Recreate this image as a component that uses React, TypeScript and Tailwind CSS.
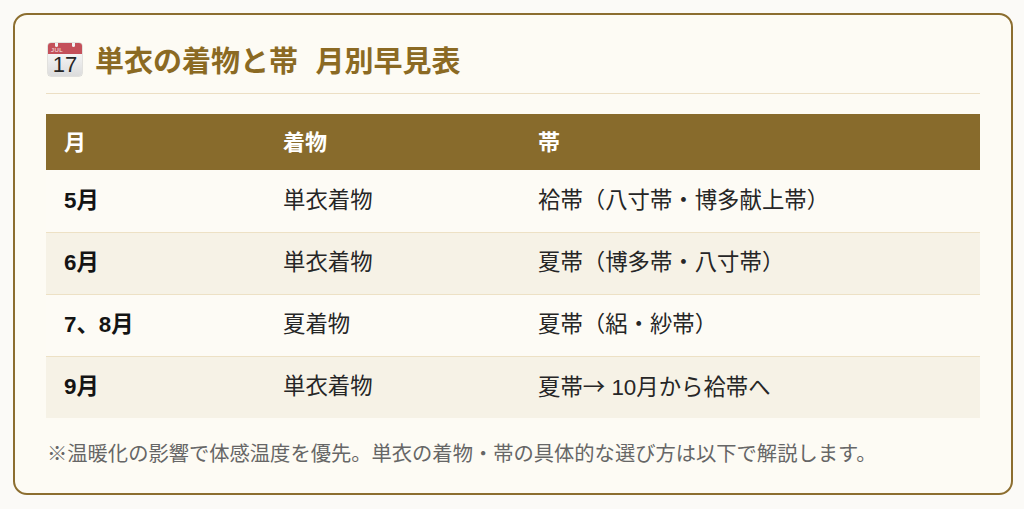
import React from "react";

const rows = [
  { m: "5月", k: "単衣着物", o: <>袷帯（八寸帯・博多献上帯）</>, alt: false },
  { m: "6月", k: "単衣着物", o: <>夏帯（博多帯・八寸帯）</>, alt: true },
  { m: "7、8月", k: "夏着物", o: <>夏帯（絽・紗帯）</>, alt: false },
  {
    m: "9月",
    k: "単衣着物",
    o: (
      <>
        夏帯<span style={{ fontFamily: '"Noto Sans CJK JP", sans-serif' }}>→</span> 10月から袷帯へ
      </>
    ),
    alt: true,
  },
];

function CalendarIcon() {
  return (
    <div className="w-[34px] h-[33px] rounded-[3px] overflow-hidden flex flex-col shrink-0 shadow-[0_0_0_0.5px_#c8c8c8]">
      <div className="relative h-[11px] bg-[#c4505a] flex items-end pl-[3px]">
        <span className="text-[6px] leading-[7px] text-white/90 tracking-[0.5px]" style={{ fontFamily: '"Liberation Sans", sans-serif' }}>
          JUL
        </span>
        <div className="absolute top-[-1px] left-[7px] w-[3px] h-[5px] rounded-full bg-[#f2f2f2]" />
        <div className="absolute top-[-1px] right-[7px] w-[3px] h-[5px] rounded-full bg-[#f2f2f2]" />
      </div>
      <div className="flex-1 bg-gradient-to-b from-[#f4f4f4] to-[#dcdcdc] flex items-center justify-center">
        <span className="text-[22px] leading-none text-[#262626]" style={{ fontFamily: '"Liberation Sans", sans-serif' }}>
          17
        </span>
      </div>
    </div>
  );
}

export default function App() {
  return (
    <div className="w-[1024px] h-[509px] bg-[#fbfaf7] pt-[13px] pl-[13px]" style={{ fontFamily: '"Liberation Sans", "Noto Sans CJK JP", sans-serif' }}>
      <div className="w-[1000px] h-[482px] border-2 border-[#8c6e30] rounded-[14px] bg-[#fdfbf4] px-[31px]">
        <div className="pt-[26px] pb-[16px] border-b border-[#ecdfc4] flex items-center gap-[13px] pl-[2px]">
          <CalendarIcon />
          <h1 className="text-[29px] leading-[36px] font-bold text-[#8b6a23] [word-spacing:11px]" style={{ fontFamily: '"Noto Sans CJK JP", sans-serif' }}>
            単衣の着物と帯 月別早見表
          </h1>
        </div>
        <table className="mt-[20px] w-full table-fixed border-collapse">
          <colgroup>
            <col className="w-[219px]" />
            <col className="w-[255px]" />
            <col />
          </colgroup>
          <thead>
            <tr className="bg-[#886b2c] h-[56px]">
              <th className="text-left pl-[18px] text-[22px] font-bold text-white">月</th>
              <th className="text-left pl-[18px] text-[22px] font-bold text-white">着物</th>
              <th className="text-left pl-[18px] text-[22px] font-bold text-white">帯</th>
            </tr>
          </thead>
          <tbody>
            {rows.map((r, i) => (
              <tr
                key={r.m}
                className={`h-[62px] ${r.alt ? "bg-[#f6f2e6]" : "bg-[#fdfbf5]"} ${i < rows.length - 1 ? "border-b border-[#ede1c5]" : ""}`}
              >
                <td className="pl-[18px] text-[22.4px] font-bold text-[#141414]">{r.m}</td>
                <td className="pl-[18px] text-[22.4px] text-[#262626]">{r.k}</td>
                <td className="pl-[18px] text-[22.4px] text-[#262626]">{r.o}</td>
              </tr>
            ))}
          </tbody>
        </table>
        <p className="mt-[19px] text-[20.3px] leading-[30px] text-[#666] pl-[1px]" style={{ fontFamily: '"Noto Sans CJK JP", sans-serif' }}>
          ※温暖化の影響で体感温度を優先。単衣の着物・帯の具体的な選び方は以下で解説します。
        </p>
      </div>
    </div>
  );
}
